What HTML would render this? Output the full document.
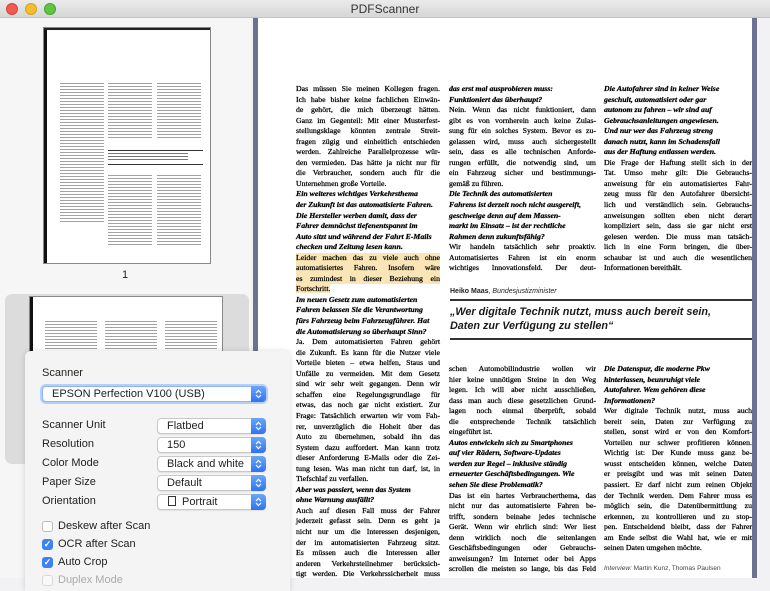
<!DOCTYPE html>
<html><head><meta charset="utf-8">
<style>
*{margin:0;padding:0;box-sizing:border-box}
body{width:770px;height:578px;overflow:hidden;background:#f2f2f4;font-family:"Liberation Sans",sans-serif;position:relative}
.title{position:absolute;left:0;top:0;width:770px;height:18px;background:linear-gradient(#ebebeb,#d6d6d6);border-bottom:1px solid #c4c4c4;text-align:center;font-size:12px;line-height:18px;color:#333}
.dot{position:absolute;top:3px;width:12px;height:12px;border-radius:50%}
.side{position:absolute;left:0;top:18px;width:251px;height:560px;background:#f6f6f6}
.doc{position:absolute;left:253px;top:18px;width:504px;height:560px;background:#6c7390}
.page{position:absolute;left:258px;top:18px;width:494px;height:560px;background:#fff;overflow:hidden}
.col{position:absolute;font-family:"Liberation Serif",serif;font-size:7.8px;line-height:10.55px;color:#000;-webkit-text-stroke:0.25px #000}
.col div{text-align:justify;text-align-last:justify;white-space:nowrap;height:10.55px;overflow:visible}
.col div.l{text-align-last:left}
.col div.b{font-weight:bold;font-style:italic;text-align-last:left}
.hl{background:#fae5b6}
.thumb{position:absolute;background:#fff;border:1px solid #888}
.lines{position:absolute;background:repeating-linear-gradient(#555 0 1px,transparent 1px 3px);opacity:.55}
.panel{position:absolute;left:25px;top:351px;width:265px;height:240px;background:#f4f4f4;border-radius:6px 6px 0 0;box-shadow:0 0 6px rgba(0,0,0,.15);font-size:11px;color:#222}
.lab{position:absolute;left:17px}
.pop{position:absolute;height:16px;background:#fff;border:1px solid #c8c8c8;border-radius:4px;box-shadow:0 1px 1px rgba(0,0,0,.08);font-size:11px;line-height:14px;padding-left:9px}
.step{position:absolute;right:-1px;top:-1px;width:15px;height:16px;background:linear-gradient(#6aa6f8,#2f73ef);border-radius:0 4px 4px 0}
.step svg{position:absolute;left:4px;top:3px}
.cb{position:absolute;left:17px;width:11px;height:11px;border-radius:3px;border:1px solid #bdbdbd;background:#fff}
.cb.on{background:#3b82f3;border-color:#3b82f3;color:#fff;font-size:9px;line-height:9px;text-align:center;font-weight:bold}
.cl{position:absolute;left:33px}
</style></head><body>
<div class="title">PDFScanner
<div class="dot" style="left:6px;background:#f05a52;border:1px solid #d4443c"></div>
<div class="dot" style="left:25px;background:#f6bd30;border:1px solid #d9a020"></div>
<div class="dot" style="left:44px;background:#5fc63f;border:1px solid #45a52c"></div>
</div>
<div class="side">
 <div class="thumb" style="left:43px;top:9px;width:168px;height:237px">
  <div style="position:absolute;left:0;top:0;width:3px;height:235px;background:#111"></div>
  <div style="position:absolute;left:0;top:0;width:166px;height:2px;background:#222"></div>
  <div class="lines" style="left:16px;top:55px;width:44px;height:140px"></div>
  <div class="lines" style="left:64px;top:55px;width:44px;height:55px"></div>
  <div class="lines" style="left:113px;top:55px;width:44px;height:55px"></div>
  <div style="position:absolute;left:64px;top:122px;width:95px;height:1px;background:#333"></div>
  <div class="lines" style="left:64px;top:125px;width:80px;height:8px;opacity:.8"></div>
  <div style="position:absolute;left:64px;top:136px;width:95px;height:1px;background:#333"></div>
  <div class="lines" style="left:64px;top:147px;width:44px;height:70px"></div>
  <div class="lines" style="left:113px;top:147px;width:44px;height:70px"></div>
 </div>
 <div style="position:absolute;left:122px;top:251px;font-size:11px;color:#222">1</div>
 <div style="position:absolute;left:5px;top:276px;width:244px;height:170px;background:#dcdcdc;border-radius:7px"></div>
 <div class="thumb" style="left:29px;top:278px;width:194px;height:120px">
  <div style="position:absolute;left:0;top:0;width:3px;height:120px;background:#111"></div>
  <div class="lines" style="left:15px;top:24px;width:52px;height:40px"></div>
  <div class="lines" style="left:75px;top:24px;width:52px;height:40px"></div>
  <div class="lines" style="left:135px;top:24px;width:52px;height:40px"></div>
 </div>
</div>
<div class="doc"></div>
<div class="page">
 <div class="col" style="left:38px;top:66px;width:144px">
  <div>Das müssen Sie meinen Kollegen fragen.</div>
  <div>Ich habe bisher keine fachlichen Einwän-</div>
  <div>de gehört, die mich überzeugt hätten.</div>
  <div>Ganz im Gegenteil: Mit einer Musterfest-</div>
  <div>stellungsklage könnten zentrale Streit-</div>
  <div>fragen zügig und einheitlich entschieden</div>
  <div>werden. Zahlreiche Parallelprozesse wür-</div>
  <div>den vermieden. Das hätte ja nicht nur für</div>
  <div>die Verbraucher, sondern auch für die</div>
  <div class="l">Unternehmen große Vorteile.</div>
  <div class="b">Ein weiteres wichtiges Verkehrsthema</div>
  <div class="b">der Zukunft ist das automatisierte Fahren.</div>
  <div class="b">Die Hersteller werben damit, dass der</div>
  <div class="b">Fahrer demnächst tiefenentspannt im</div>
  <div class="b">Auto sitzt und während der Fahrt E-Mails</div>
  <div class="b">checken und Zeitung lesen kann.</div>
  <div class="hl">Leider machen das zu viele auch ohne</div>
  <div class="hl">automatisiertes Fahren. Insofern wäre</div>
  <div class="hl">es zumindest in dieser Beziehung ein</div>
  <div class="l"><span class="hl">Fortschritt.</span></div>
  <div class="b">Im neuen Gesetz zum automatisierten</div>
  <div class="b">Fahren belassen Sie die Verantwortung</div>
  <div class="b">fürs Fahrzeug beim Fahrzeugführer. Hat</div>
  <div class="b">die Automatisierung so überhaupt Sinn?</div>
  <div>Ja. Dem automatisierten Fahren gehört</div>
  <div>die Zukunft. Es kann für die Nutzer viele</div>
  <div>Vorteile bieten – etwa helfen, Staus und</div>
  <div>Unfälle zu vermeiden. Mit dem Gesetz</div>
  <div>sind wir sehr weit gegangen. Denn wir</div>
  <div>schaffen eine Regelungsgrundlage für</div>
  <div>etwas, das noch gar nicht existiert. Zur</div>
  <div>Frage: Tatsächlich erwarten wir vom Fah-</div>
  <div>rer, unverzüglich die Hoheit über das</div>
  <div>Auto zu übernehmen, sobald ihn das</div>
  <div>System dazu auffordert. Man kann trotz</div>
  <div>dieser Anforderung E-Mails oder die Zei-</div>
  <div>tung lesen. Was man nicht tun darf, ist, in</div>
  <div class="l">Tiefschlaf zu verfallen.</div>
  <div class="b">Aber was passiert, wenn das System</div>
  <div class="b">ohne Warnung ausfällt?</div>
  <div>Auch auf diesen Fall muss der Fahrer</div>
  <div>jederzeit gefasst sein. Denn es geht ja</div>
  <div>nicht nur um die Interessen desjenigen,</div>
  <div>der im automatisierten Fahrzeug sitzt.</div>
  <div>Es müssen auch die Interessen aller</div>
  <div>anderen Verkehrsteilnehmer berücksich-</div>
  <div>tigt werden. Die Verkehrssicherheit muss</div>
 </div>
 <div class="col" style="left:191px;top:66px;width:147px">
  <div class="b">das erst mal ausprobieren muss:</div>
  <div class="b">Funktioniert das überhaupt?</div>
  <div>Nein. Wenn das nicht funktioniert, dann</div>
  <div>gibt es von vornherein auch keine Zulas-</div>
  <div>sung für ein solches System. Bevor es zu-</div>
  <div>gelassen wird, muss auch sichergestellt</div>
  <div>sein, dass es alle technischen Anforde-</div>
  <div>rungen erfüllt, die notwendig sind, um</div>
  <div>ein Fahrzeug sicher und bestimmungs-</div>
  <div class="l">gemäß zu führen.</div>
  <div class="b">Die Technik des automatisierten</div>
  <div class="b">Fahrens ist derzeit noch nicht ausgereift,</div>
  <div class="b">geschweige denn auf dem Massen-</div>
  <div class="b">markt im Einsatz – ist der rechtliche</div>
  <div class="b">Rahmen denn zukunftsfähig?</div>
  <div>Wir handeln tatsächlich sehr proaktiv.</div>
  <div>Automatisiertes Fahren ist ein enorm</div>
  <div>wichtiges Innovationsfeld. Der deut-</div>
 </div>
 <div class="col" style="left:346px;top:66px;width:148px">
  <div class="b">Die Autofahrer sind in keiner Weise</div>
  <div class="b">geschult, automatisiert oder gar</div>
  <div class="b">autonom zu fahren – wir sind auf</div>
  <div class="b">Gebrauchsanleitungen angewiesen.</div>
  <div class="b">Und nur wer das Fahrzeug streng</div>
  <div class="b">danach nutzt, kann im Schadensfall</div>
  <div class="b">aus der Haftung entlassen werden.</div>
  <div>Die Frage der Haftung stellt sich in der</div>
  <div>Tat. Umso mehr gilt: Die Gebrauchs-</div>
  <div>anweisung für ein automatisiertes Fahr-</div>
  <div>zeug muss für den Autofahrer übersicht-</div>
  <div>lich und verständlich sein. Gebrauchs-</div>
  <div>anweisungen sollten eben nicht derart</div>
  <div>kompliziert sein, dass sie gar nicht erst</div>
  <div>gelesen werden. Die muss man tatsäch-</div>
  <div>lich in eine Form bringen, die über-</div>
  <div>schaubar ist und auch die wesentlichen</div>
  <div class="l">Informationen bereithält.</div>
 </div>
 <div style="position:absolute;left:192px;top:270px;font-family:'Liberation Sans',sans-serif;font-size:7px;color:#222"><b>Heiko Maas</b>, <i>Bundesjustizminister</i></div>
 <div style="position:absolute;left:192px;top:281px;width:302px;height:2px;background:#333"></div>
 <div style="position:absolute;left:192px;top:288px;font-family:'Liberation Sans',sans-serif;font-weight:bold;font-style:italic;font-size:10.8px;line-height:13.5px;color:#1a1a1a;white-space:nowrap">„Wer digitale Technik nutzt, muss auch bereit sein,<br>Daten zur Verfügung zu stellen“</div>
 <div style="position:absolute;left:192px;top:320px;width:302px;height:2px;background:#333"></div>
 <div class="col" style="left:191px;top:346px;width:147px;line-height:10.8px">
  <div>schen Automobilindustrie wollen wir</div>
  <div>hier keine unnötigen Steine in den Weg</div>
  <div>legen. Ich will aber nicht ausschließen,</div>
  <div>dass man auch diese gesetzlichen Grund-</div>
  <div>lagen noch einmal überprüft, sobald</div>
  <div>die entsprechende Technik tatsächlich</div>
  <div class="l">eingeführt ist.</div>
  <div class="b">Autos entwickeln sich zu Smartphones</div>
  <div class="b">auf vier Rädern, Software-Updates</div>
  <div class="b">werden zur Regel – inklusive ständig</div>
  <div class="b">erneuerter Geschäftsbedingungen. Wie</div>
  <div class="b">sehen Sie diese Problematik?</div>
  <div>Das ist ein hartes Verbraucherthema, das</div>
  <div>nicht nur das automatisierte Fahren be-</div>
  <div>trifft, sondern beinahe jedes technische</div>
  <div>Gerät. Wenn wir ehrlich sind: Wer liest</div>
  <div>denn wirklich noch die seitenlangen</div>
  <div>Geschäftsbedingungen oder Gebrauchs-</div>
  <div>anweisungen? Im Internet oder bei Apps</div>
  <div>scrollen die meisten so lange, bis das Feld</div>
 </div>
 <div class="col" style="left:346px;top:346px;width:148px;line-height:10.8px">
  <div class="b">Die Datenspur, die moderne Pkw</div>
  <div class="b">hinterlassen, beunruhigt viele</div>
  <div class="b">Autofahrer. Wem gehören diese</div>
  <div class="b">Informationen?</div>
  <div>Wer digitale Technik nutzt, muss auch</div>
  <div>bereit sein, Daten zur Verfügung zu</div>
  <div>stellen, sonst wird er von den Komfort-</div>
  <div>Vorteilen nur schwer profitieren können.</div>
  <div>Wichtig ist: Der Kunde muss ganz be-</div>
  <div>wusst entscheiden können, welche Daten</div>
  <div>er preisgibt und was mit seinen Daten</div>
  <div>passiert. Er darf nicht zum reinen Objekt</div>
  <div>der Technik werden. Dem Fahrer muss es</div>
  <div>möglich sein, die Datenübermittlung zu</div>
  <div>erkennen, zu kontrollieren und zu stop-</div>
  <div>pen. Entscheidend bleibt, dass der Fahrer</div>
  <div>am Ende selbst die Wahl hat, wie er mit</div>
  <div class="l">seinen Daten umgehen möchte.</div>
  <div class="l"></div>
  <div class="l" style="font-family:'Liberation Sans',sans-serif;font-size:6.5px;color:#444;-webkit-text-stroke:0"><i>Interview:</i> Martin Kunz, Thomas Paulsen</div>
 </div>
</div>
<div style="position:absolute;left:757px;top:18px;width:13px;height:560px;background:#f2f2f4"></div>
<div class="panel">
 <div class="lab" style="top:16px">Scanner</div>
 <div class="pop" style="left:17px;top:35px;width:224px;border-color:#8db3f3;box-shadow:0 0 0 2px #b5cff7">EPSON Perfection V100 (USB)<div class="step"><svg width="7" height="10"><path d="M1 4L3.5 1.5L6 4M1 6L3.5 8.5L6 6" stroke="#fff" stroke-width="1.2" fill="none"/></svg></div></div>
 <div class="lab" style="top:68px">Scanner Unit</div>
 <div class="pop" style="left:132px;top:67px;width:109px">Flatbed<div class="step"><svg width="7" height="10"><path d="M1 4L3.5 1.5L6 4M1 6L3.5 8.5L6 6" stroke="#fff" stroke-width="1.2" fill="none"/></svg></div></div>
 <div class="lab" style="top:87px">Resolution</div>
 <div class="pop" style="left:132px;top:86px;width:109px">150<div class="step"><svg width="7" height="10"><path d="M1 4L3.5 1.5L6 4M1 6L3.5 8.5L6 6" stroke="#fff" stroke-width="1.2" fill="none"/></svg></div></div>
 <div class="lab" style="top:106px">Color Mode</div>
 <div class="pop" style="left:132px;top:105px;width:109px">Black and white<div class="step"><svg width="7" height="10"><path d="M1 4L3.5 1.5L6 4M1 6L3.5 8.5L6 6" stroke="#fff" stroke-width="1.2" fill="none"/></svg></div></div>
 <div class="lab" style="top:125px">Paper Size</div>
 <div class="pop" style="left:132px;top:124px;width:109px">Default<div class="step"><svg width="7" height="10"><path d="M1 4L3.5 1.5L6 4M1 6L3.5 8.5L6 6" stroke="#fff" stroke-width="1.2" fill="none"/></svg></div></div>
 <div class="lab" style="top:144px">Orientation</div>
 <div class="pop" style="left:132px;top:143px;width:109px"><span style="display:inline-block;width:8px;height:10px;border:1px solid #333;margin:0 6px 0 1px;vertical-align:-1px"></span>Portrait<div class="step"><svg width="7" height="10"><path d="M1 4L3.5 1.5L6 4M1 6L3.5 8.5L6 6" stroke="#fff" stroke-width="1.2" fill="none"/></svg></div></div>
 <div class="cb" style="top:170px"></div><div class="cl" style="top:169px">Deskew after Scan</div>
 <div class="cb on" style="top:188px">✓</div><div class="cl" style="top:187px">OCR after Scan</div>
 <div class="cb on" style="top:206px">✓</div><div class="cl" style="top:205px">Auto Crop</div>
 <div class="cb" style="top:224px;opacity:.5"></div><div class="cl" style="top:223px;color:#aaa">Duplex Mode</div>
</div>
</body></html>
